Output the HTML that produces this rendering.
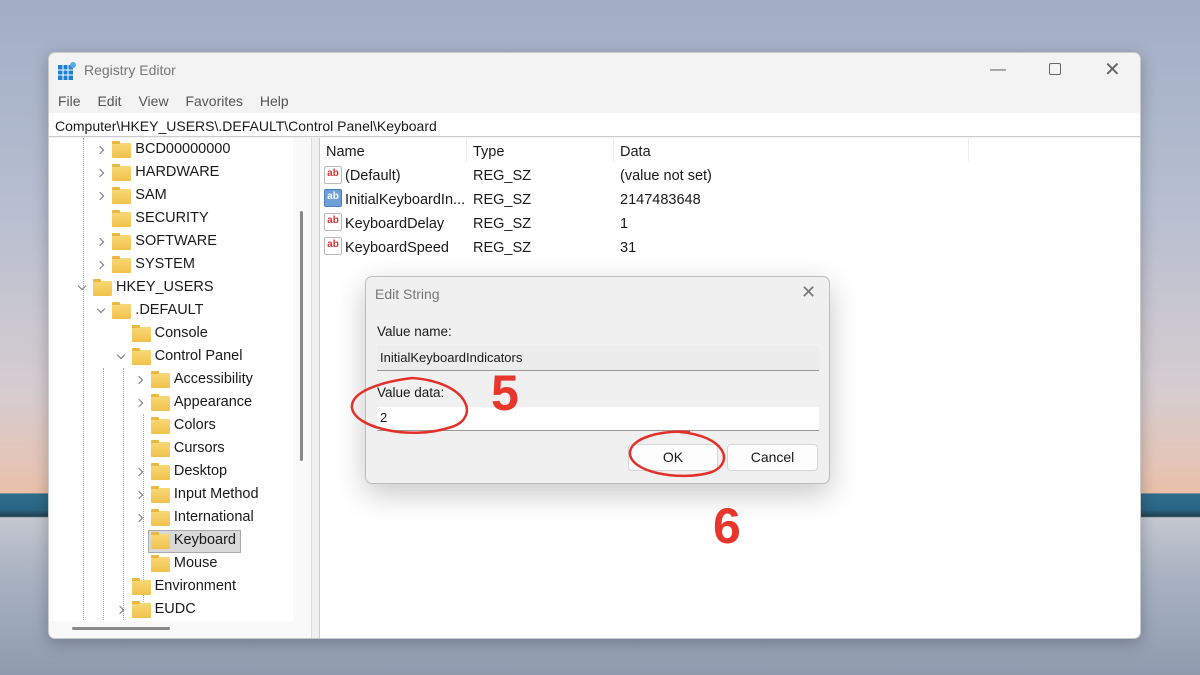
<!DOCTYPE html>
<html><head><style>
*{margin:0;padding:0;box-sizing:border-box}
body{width:1200px;height:675px;overflow:hidden;position:relative;font-family:"Liberation Sans",sans-serif;
background:linear-gradient(180deg,#a2aec6 0%,#b6bed0 30%,#d6cdd0 58%,#e6c4b4 70%,#eabfa8 73%,#2f6d8c 73.2%,#2b6585 75.5%,#203f4f 76.5%,#c4c8d0 76.7%,#aab3c2 85%,#8e9bae 100%);}
.win{position:absolute;left:48px;top:52px;width:1093px;height:587px;background:#f3f3f3;border:1px solid #c9c9c9;border-radius:7px;overflow:hidden;box-shadow:0 4px 16px rgba(0,0,0,.25)}
.t{position:absolute;white-space:nowrap;color:#1a1a1a;font-size:14.5px}
.tree{position:absolute;left:0;top:85px;width:244px;height:500px;background:#fff}
.right{position:absolute;left:271px;top:85px;width:822px;height:502px;background:#fff}
.fold{position:absolute;width:19px;height:15px;background:linear-gradient(#f9d877,#f0c24a);border-radius:1px}
.fold:before{content:"";position:absolute;left:0;top:-2px;width:8px;height:3px;background:#e9b93f;border-radius:1px 1px 0 0}
.chev{position:absolute;width:6px;height:6px;border-right:1.3px solid #777;border-bottom:1.3px solid #777}
.ab{position:absolute;width:18px;height:18px;border:1px solid #bbb;background:#fff;font:bold 10px "Liberation Sans";color:#d33;text-align:center;line-height:14px;border-radius:2px}
.dlg{position:absolute;left:365px;top:276px;width:465px;height:208px;background:#f0f0f0;border:1px solid #bcbcbc;border-radius:7px;box-shadow:0 10px 30px rgba(0,0,0,.22)}
.btn{position:absolute;top:167px;height:27px;background:#fdfdfd;border:1px solid #d6d6d6;border-radius:4px;font-size:14px;text-align:center;line-height:25px;color:#1a1a1a}
.num{position:absolute;font:bold 50px "Liberation Sans",sans-serif;color:#e8362d}
</style></head><body>
<div class="win">
 <svg style="position:absolute;left:9px;top:8px" width="19" height="19" viewBox="0 0 19 19"><rect x="0" y="4" width="15" height="15" fill="#1f7fd3"/><g stroke="#fff" stroke-width="1"><path d="M5 4v15M10 4v15M0 9h15M0 14h15"/></g><circle cx="15" cy="4" r="3" fill="#5aa9e8"/></svg>
 <div class="t" style="left:35px;top:9px;color:#777;font-size:14px">Registry Editor</div>
 <div class="t" style="left:941px;top:8px;color:#666;font-size:16px">—</div>
 <div style="position:absolute;left:1000px;top:10px;width:12px;height:12px;border:1.2px solid #666;border-radius:2px"></div>
 <div class="t" style="left:1055px;top:4px;color:#666;font-size:20px;font-weight:300">✕</div>
 <div class="t" style="left:9px;top:40px;color:#555;font-size:14px;word-spacing:13px">File Edit View Favorites Help</div>
 <div style="position:absolute;left:0;top:60px;width:1093px;height:24px;background:#fff;border-bottom:1px solid #ccc"></div>
 <div class="t" style="left:6px;top:65px;font-size:14px">Computer\HKEY_USERS\.DEFAULT\Control Panel\Keyboard</div>
 <div class="tree">
  <div style="position:absolute;left:34px;top:0;height:500px;border-left:1px dotted #aaa"></div>
  <div style="position:absolute;left:54px;top:230px;height:270px;border-left:1px dotted #aaa"></div>
  <div style="position:absolute;left:74px;top:230px;height:260px;border-left:1px dotted #aaa"></div>
  <div style="position:absolute;left:94px;top:276px;height:196px;border-left:1px dotted #aaa"></div>
 </div>
 <div style="position:absolute;left:244px;top:85px;width:18px;height:500px;background:#f9f9f9"></div>
 <div style="position:absolute;left:251px;top:158px;width:3px;height:250px;background:#888;border-radius:2px"></div>
 <div style="position:absolute;left:0;top:568px;width:262px;height:19px;background:#f9f9f9"></div>
 <div style="position:absolute;left:23px;top:574px;width:98px;height:3px;background:#888;border-radius:2px"></div>
 <div style="position:absolute;left:262px;top:85px;width:9px;height:502px;background:#f0f0f0;border-left:1px solid #ddd;border-right:1px solid #ccc"></div>
 <div class="right">
  <div style="position:absolute;left:146px;top:0;height:24px;border-left:1px solid #eee"></div>
  <div style="position:absolute;left:293px;top:0;height:24px;border-left:1px solid #eee"></div>
  <div style="position:absolute;left:648px;top:0;height:24px;border-left:1px solid #eee"></div>
 </div>
</div>
<div id="tr"></div>
<div class="t" style="left:326px;top:144px">Name</div><div class="t" style="left:473px;top:144px">Type</div><div class="t" style="left:620px;top:144px">Data</div>
<div class="ab" style="left:324px;top:166px">ab</div><div class="t" style="left:345px;top:168px">(Default)</div><div class="t" style="left:473px;top:168px">REG_SZ</div><div class="t" style="left:620px;top:168px">(value not set)</div>
<div class="ab" style="left:324px;top:189px;background:#6f9fd8;color:#fff;border-color:#4a7fc0">ab</div><div class="t" style="left:345px;top:192px">InitialKeyboardIn...</div><div class="t" style="left:473px;top:192px">REG_SZ</div><div class="t" style="left:620px;top:192px">2147483648</div>
<div class="ab" style="left:324px;top:213px">ab</div><div class="t" style="left:345px;top:216px">KeyboardDelay</div><div class="t" style="left:473px;top:216px">REG_SZ</div><div class="t" style="left:620px;top:216px">1</div>
<div class="ab" style="left:324px;top:237px">ab</div><div class="t" style="left:345px;top:240px">KeyboardSpeed</div><div class="t" style="left:473px;top:240px">REG_SZ</div><div class="t" style="left:620px;top:240px">31</div>
<div class="dlg">
 <div class="t" style="left:9px;top:9px;color:#777;font-size:14px">Edit String</div>
 <div class="t" style="left:435px;top:5px;color:#777;font-size:18px">✕</div>
 <div class="t" style="left:11px;top:47px;font-size:13.5px">Value name:</div>
 <div style="position:absolute;left:11px;top:69px;width:442px;height:25px;background:#ececec;border-bottom:1px solid #999"></div>
 <div class="t" style="left:14px;top:73px;font-size:13px">InitialKeyboardIndicators</div>
 <div class="t" style="left:11px;top:108px;font-size:13.5px">Value data:</div>
 <div style="position:absolute;left:11px;top:130px;width:442px;height:24px;background:#fff;border-bottom:1px solid #999"></div>
 <div class="t" style="left:14px;top:133px;font-size:13px">2</div>
 <div class="btn" style="left:262px;width:90px">OK</div>
 <div class="btn" style="left:361px;width:91px">Cancel</div>
</div>
<svg style="position:absolute;left:0;top:0" width="1200" height="675">
 <g fill="none" stroke="#e3312a" stroke-width="2.5">
  <path d="M412 378 C470 382 482 420 448 428 C410 440 355 428 352 408 C350 392 380 382 412 378"/>
  <path d="M680 432 C725 436 735 462 712 472 C680 482 628 472 630 452 C632 438 660 430 690 432"/>
 </g>
</svg>
<div class="num" style="left:491px;top:364px">5</div>
<div class="num" style="left:713px;top:497px">6</div>
<script>
var rows=[["BCD00000000",1,1],["HARDWARE",1,1],["SAM",1,1],["SECURITY",1,0],["SOFTWARE",1,1],["SYSTEM",1,1],["HKEY_USERS",0,2],[".DEFAULT",1,2],["Console",2,0],["Control Panel",2,2],["Accessibility",3,1],["Appearance",3,1],["Colors",3,0],["Cursors",3,0],["Desktop",3,1],["Input Method",3,1],["International",3,1],["Keyboard",3,0],["Mouse",3,0],["Environment",2,0],["EUDC",2,1]];
var h="";rows.forEach(function(r,i){var y=150+i*23,x=93+r[1]*19.3;
if(r[0]=="Keyboard")h+='<div style="position:absolute;left:'+(x-3)+'px;top:'+(y-11)+'px;width:93px;height:23px;background:#d9d9d9;border:1px solid #aaa"></div>';
if(r[2]==1)h+='<div class="chev" style="left:'+(x-15)+'px;top:'+(y-3)+'px;transform:rotate(-45deg)"></div>';
if(r[2]==2)h+='<div class="chev" style="left:'+(x-14)+'px;top:'+(y-5)+'px;transform:rotate(45deg)"></div>';
h+='<div class="fold" style="left:'+x+'px;top:'+(y-7)+'px"></div><div class="t" style="left:'+(x+23)+'px;top:'+(y-9)+'px">'+r[0]+'</div>';});
document.getElementById("tr").outerHTML=h;
</script>
</body></html>
